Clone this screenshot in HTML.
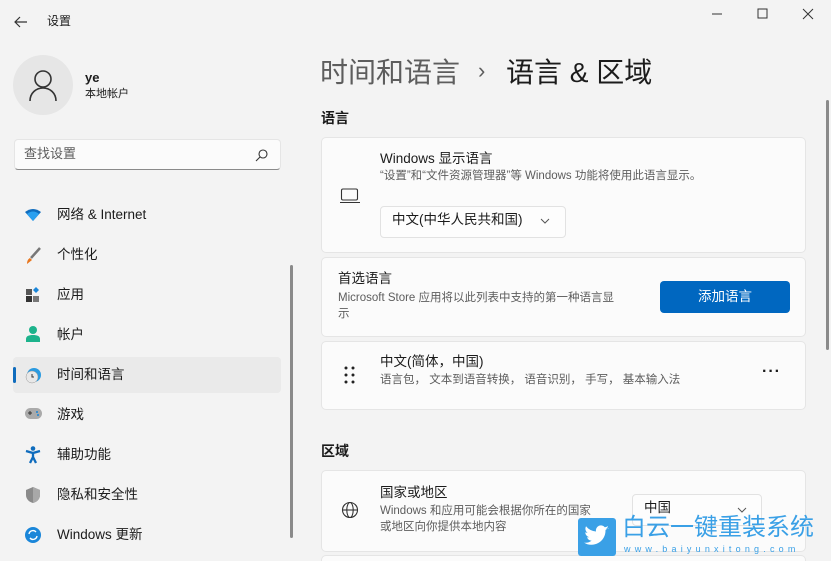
<!DOCTYPE html>
<html><head><meta charset="utf-8"><style>
*{margin:0;padding:0;box-sizing:border-box}
html,body{width:831px;height:561px;overflow:hidden}
body{background:#f3f3f3;font-family:"Liberation Sans","Noto Sans CJK SC",sans-serif;color:#1b1b1b;position:relative}
.a{position:absolute;white-space:nowrap;line-height:1.2}
.card{position:absolute;left:321px;width:485px;background:#fbfbfb;border:1px solid #e5e5e5;border-radius:5px}
.nav{position:absolute;left:57px;font-size:13.5px;line-height:1.2}
.ic{position:absolute;left:25px}
.s{font-size:12px;color:#5d5d5d}
</style></head><body>
<svg class="a" style="left:13px;top:15px" width="16" height="14"><path d="M14 7H2M7 2L2 7l5 5" stroke="#333" stroke-width="1.2" fill="none"/></svg>
<div class="a" style="left:47px;top:14px;font-size:12px">设置</div>
<svg class="a" style="left:712px;top:6px" width="110" height="16"><path d="M0 8h10" stroke="#333"/><rect x="46" y="3" width="9" height="9" fill="none" stroke="#333"/><path d="M91 3l10 10M101 3l-10 10" stroke="#333"/></svg>
<div class="a" style="left:13px;top:55px;width:60px;height:60px;border-radius:50%;background:#e6e6e6"></div>
<svg class="a" style="left:28px;top:68px" width="30" height="34"><circle cx="15" cy="11" r="8" fill="none" stroke="#333" stroke-width="1.6"/><path d="M2 33c0-8 6-13 13-13s13 5 13 13" fill="none" stroke="#333" stroke-width="1.6"/></svg>
<div class="a" style="left:85px;top:70px;font-size:13px;font-weight:bold">ye</div>
<div class="a" style="left:85px;top:88px;font-size:11px">本地帐户</div>
<div class="a" style="left:14px;top:139px;width:267px;height:31px;background:#fbfbfb;border:1px solid #e5e5e5;border-bottom-color:#8a8a8a;border-radius:4px"></div>
<div class="a" style="left:24px;top:146px;font-size:13px;color:#5d5d5d">查找设置</div>
<svg class="a" style="left:255px;top:148px" width="14" height="14"><circle cx="8" cy="6" r="4" fill="none" stroke="#333" stroke-width="1.1"/><path d="M5 9l-4 4" stroke="#333" stroke-width="1.1"/></svg>
<svg class="ic" style="top:209px" width="16" height="12"><path d="M0 3Q8-3 16 3L8 12Z" fill="#0f6cbd"/><path d="M2 5Q8 0 14 5L8 12Z" fill="#2aa0f0"/></svg>
<div class="nav" style="top:207px">网络 &amp; Internet</div>
<svg class="ic" style="top:247px" width="16" height="18"><path d="M15 1L6 11" stroke="#777" stroke-width="2.5"/><path d="M5 11l2 2-5 4c0-3 1-5 3-6z" fill="#e8761e"/></svg>
<div class="nav" style="top:247px">个性化</div>
<svg class="ic" style="top:287px" width="16" height="16"><rect x="1" y="2" width="6" height="6" fill="#555"/><rect x="1" y="9" width="6" height="6" fill="#333"/><rect x="8" y="9" width="6" height="6" fill="#777"/><path d="M11 0l3 3-3 3-3-3z" fill="#1a86d9"/></svg>
<div class="nav" style="top:287px">应用</div>
<svg class="ic" style="top:326px" width="16" height="16"><circle cx="8" cy="4" r="4" fill="#1db38c"/><path d="M1 16v-3c0-3 3-4 7-4s7 1 7 4v3z" fill="#1db38c"/></svg>
<div class="nav" style="top:327px">帐户</div>
<div class="a" style="left:13px;top:357px;width:268px;height:36px;background:#eaeaea;border-radius:4px"></div>
<div class="a" style="left:13px;top:367px;width:3px;height:16px;background:#0f6cbd;border-radius:2px"></div>
<svg class="ic" style="top:367px" width="17" height="17"><circle cx="9" cy="8" r="7" fill="#2a9ae0"/><circle cx="7" cy="10" r="6" fill="#e8e8e8" stroke="#999" stroke-width=".5"/><path d="M7 7v3h2" stroke="#333" fill="none"/></svg>
<div class="nav" style="top:367px">时间和语言</div>
<svg class="ic" style="top:408px" width="17" height="12"><rect x="0" y="0" width="17" height="11" rx="5.5" fill="#aaa"/><path d="M3 5h4M5 3v4" stroke="#333"/><circle cx="12" cy="4" r="1" fill="#1a86d9"/><circle cx="13" cy="7" r="1" fill="#1a86d9"/></svg>
<div class="nav" style="top:407px">游戏</div>
<svg class="ic" style="top:446px" width="16" height="18"><circle cx="8" cy="2.5" r="2.3" fill="#0f6cbd"/><path d="M1 5l7 2 7-2M8 7v4l-3 6M8 11l3 6" stroke="#0f6cbd" stroke-width="2.3" fill="none"/></svg>
<div class="nav" style="top:447px">辅助功能</div>
<svg class="ic" style="top:487px" width="16" height="17"><path d="M8 0l7 3v5c0 4-3 7-7 8-4-1-7-4-7-8V3z" fill="#8a8a8a"/><path d="M8 0l7 3v5c0 4-3 7-7 8z" fill="#a8a8a8"/></svg>
<div class="nav" style="top:487px">隐私和安全性</div>
<svg class="ic" style="top:527px" width="16" height="16"><circle cx="8" cy="8" r="8" fill="#1a86d9"/><path d="M4 7a4 4 0 0 1 7-2M12 9a4 4 0 0 1-7 2" stroke="#fff" stroke-width="1.4" fill="none"/></svg>
<div class="nav" style="top:527px">Windows 更新</div>
<div class="a" style="left:290px;top:265px;width:3px;height:273px;background:#8a8a8a;border-radius:2px"></div>
<div class="a" style="left:826px;top:100px;width:3px;height:250px;background:#8a8a8a;border-radius:2px"></div>

<div class="a" style="left:320px;top:56px;font-size:28px;color:#5d5d5d">时间和语言</div>
<div class="a" style="left:478px;top:58px;font-size:22px;color:#5d5d5d">›</div>
<div class="a" style="left:506px;top:56px;font-size:28px">语言 &amp; 区域</div>
<div class="a" style="left:321px;top:110px;font-size:14px;font-weight:bold">语言</div>

<div class="card" style="top:137px;height:116px"></div>
<svg class="a" style="left:340px;top:188px" width="20" height="16"><rect x="1.5" y="1" width="16" height="11" rx="1.5" fill="none" stroke="#333" stroke-width="1.1"/><path d="M0 14.5h20" stroke="#333" stroke-width="1.1"/></svg>
<div class="a" style="left:380px;top:151px;font-size:13.5px">Windows 显示语言</div>
<div class="a s" style="left:380px;top:170px;font-size:11.5px">“设置”和“文件资源管理器”等 Windows 功能将使用此语言显示。</div>
<div class="a" style="left:380px;top:206px;width:186px;height:32px;background:#fdfdfd;border:1px solid #e2e2e2;border-radius:4px"></div>
<div class="a" style="left:392px;top:212px;font-size:13.5px">中文(中华人民共和国)</div>
<svg class="a" style="left:540px;top:218px" width="10" height="7"><path d="M1 1l4 4 4-4" stroke="#555" fill="none"/></svg>

<div class="card" style="top:257px;height:80px"></div>
<div class="a" style="left:338px;top:271px;font-size:13.5px">首选语言</div>
<div class="a s" style="left:338px;top:290px;font-size:11.5px;line-height:16px">Microsoft Store 应用将以此列表中支持的第一种语言显<br>示</div>
<div class="a" style="left:660px;top:281px;width:130px;height:32px;background:#0067c0;border-radius:4px;color:#fff;font-size:13.5px;text-align:center;line-height:32px">添加语言</div>

<div class="card" style="top:341px;height:69px"></div>
<svg class="a" style="left:344px;top:366px" width="12" height="18"><g fill="#222"><circle cx="2" cy="2" r="1.5"/><circle cx="9" cy="2" r="1.5"/><circle cx="2" cy="9" r="1.5"/><circle cx="9" cy="9" r="1.5"/><circle cx="2" cy="16" r="1.5"/><circle cx="9" cy="16" r="1.5"/></g></svg>
<div class="a" style="left:380px;top:354px;font-size:13.5px">中文(简体，中国)</div>
<div class="a s" style="left:380px;top:374px;font-size:11.5px">语言包， 文本到语音转换， 语音识别， 手写， 基本输入法</div>
<div class="a" style="left:762px;top:362px;font-size:16px;font-weight:bold;letter-spacing:1px">···</div>

<div class="a" style="left:321px;top:443px;font-size:14px;font-weight:bold">区域</div>
<div class="card" style="top:470px;height:82px"></div>
<svg class="a" style="left:341px;top:501px" width="18" height="18"><g fill="none" stroke="#333" stroke-width="1.1"><circle cx="9" cy="9" r="7.5"/><ellipse cx="9" cy="9" rx="3.2" ry="7.5"/><path d="M1.5 9h15"/></g></svg>
<div class="a" style="left:380px;top:485px;font-size:13.5px">国家或地区</div>
<div class="a s" style="left:380px;top:503px;font-size:11.5px;line-height:16px">Windows 和应用可能会根据你所在的国家<br>或地区向你提供本地内容</div>
<div class="a" style="left:632px;top:494px;width:130px;height:32px;background:#fdfdfd;border:1px solid #e2e2e2;border-radius:4px"></div>
<div class="a" style="left:644px;top:500px;font-size:13.5px">中国</div>
<svg class="a" style="left:737px;top:507px" width="10" height="7"><path d="M1 1l4 4 4-4" stroke="#555" fill="none"/></svg>
<div class="card" style="top:555px;height:20px"></div>

<div class="a" style="left:578px;top:518px;width:38px;height:38px;background:#3aa0e6;border-radius:3px"></div>
<svg class="a" style="left:583px;top:524px" width="28" height="24"><path d="M26 4c-1 .5-2 .7-3 .8 1-.6 2-1.6 2-2.7-1 .6-2 1-3.2 1.2A5 5 0 0 0 13 7.5 14 14 0 0 1 3 2.3a5 5 0 0 0 1.5 6.5c-.8 0-1.6-.3-2.2-.6 0 2.4 1.7 4.4 4 4.9-.7.2-1.5.2-2.2.1.6 2 2.4 3.4 4.6 3.4A10 10 0 0 1 1 18.6 14 14 0 0 0 22.5 6.8V6c1-.6 1.8-1.3 2.5-2z" fill="#fff"/></svg>
<div class="a" style="left:622px;top:514px;font-size:24px;color:#3aa0e6">白云一键重装系统</div>
<div class="a" style="left:624px;top:544px;font-size:9px;color:#3aa0e6;letter-spacing:4.2px">www.baiyunxitong.com</div>
</body></html>
